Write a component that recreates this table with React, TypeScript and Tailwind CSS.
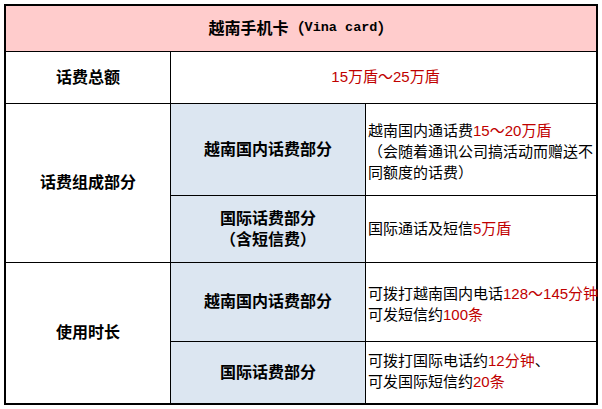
const cjk = "font-['Liberation_Sans','Noto_Sans_CJK_SC',sans-serif]";

const Red = ({ children }: { children: React.ReactNode }) => (
  <span className="text-[#c00000]">{children}</span>
);

export default function App() {
  return (
    <div className={`p-[4px] bg-white ${cjk}`}>
      <div className="w-[594px] h-[401px] border-2 border-black grid grid-cols-[165px_195px_230px] grid-rows-[46px_52px_92px_67px_79px_61px] text-black">
        {/* 标题 */}
        <div className="col-span-3 border-b border-black bg-[#ffcccc] flex items-center justify-center text-[16px] font-bold">
          越南手机卡（<span className="font-['Liberation_Mono',monospace] text-[13.5px]">Vina card</span>）
        </div>

        {/* 话费总额 */}
        <div className="border-r border-b border-black flex items-center justify-center text-[16px] font-bold">
          话费总额
        </div>
        <div className="col-span-2 border-b border-black flex items-center justify-center text-[15px] pl-[4px]">
          <Red>15万盾～25万盾</Red>
        </div>

        {/* 话费组成部分 */}
        <div className="row-span-2 border-r border-b border-black flex items-center justify-center text-[16px] font-bold">
          话费组成部分
        </div>
        <div className="border-r border-b border-black bg-[#dce6f1] flex items-center justify-center text-[16px] font-bold">
          越南国内话费部分
        </div>
        <div className="border-b border-black flex items-center pl-[2px] pt-[4px] text-[15px] leading-[21px] whitespace-nowrap">
          <p>
            越南国内通话费<Red>15～20万盾</Red>
            <br />
            （会随着通讯公司搞活动而赠送不
            <br />
            同额度的话费）
          </p>
        </div>
        <div className="border-r border-b border-black bg-[#dce6f1] flex items-center justify-center text-center text-[16px] font-bold leading-[21px]">
          <p>
            国际话费部分
            <br />
            （含短信费）
          </p>
        </div>
        <div className="border-b border-black flex items-center pl-[2px] text-[15px]">
          <p>
            国际通话及短信<Red>5万盾</Red>
          </p>
        </div>

        {/* 使用时长 */}
        <div className="row-span-2 border-r border-black flex items-center justify-center text-[16px] font-bold">
          使用时长
        </div>
        <div className="border-r border-b border-black bg-[#dce6f1] flex items-center justify-center text-[16px] font-bold">
          越南国内话费部分
        </div>
        <div className="border-b border-black flex items-center pl-[2px] pt-[4px] text-[15px] leading-[21px] whitespace-nowrap">
          <p>
            可拨打越南国内电话<Red>128～145分钟</Red>
            <br />
            可发短信约<Red>100条</Red>
          </p>
        </div>
        <div className="border-r border-black bg-[#dce6f1] flex items-center justify-center text-[16px] font-bold">
          国际话费部分
        </div>
        <div className="flex items-center pl-[2px] pb-[4px] text-[15px] leading-[21px] whitespace-nowrap">
          <p>
            可拨打国际电话约<Red>12分钟</Red>、
            <br />
            可发国际短信约<Red>20条</Red>
          </p>
        </div>
      </div>
    </div>
  );
}
